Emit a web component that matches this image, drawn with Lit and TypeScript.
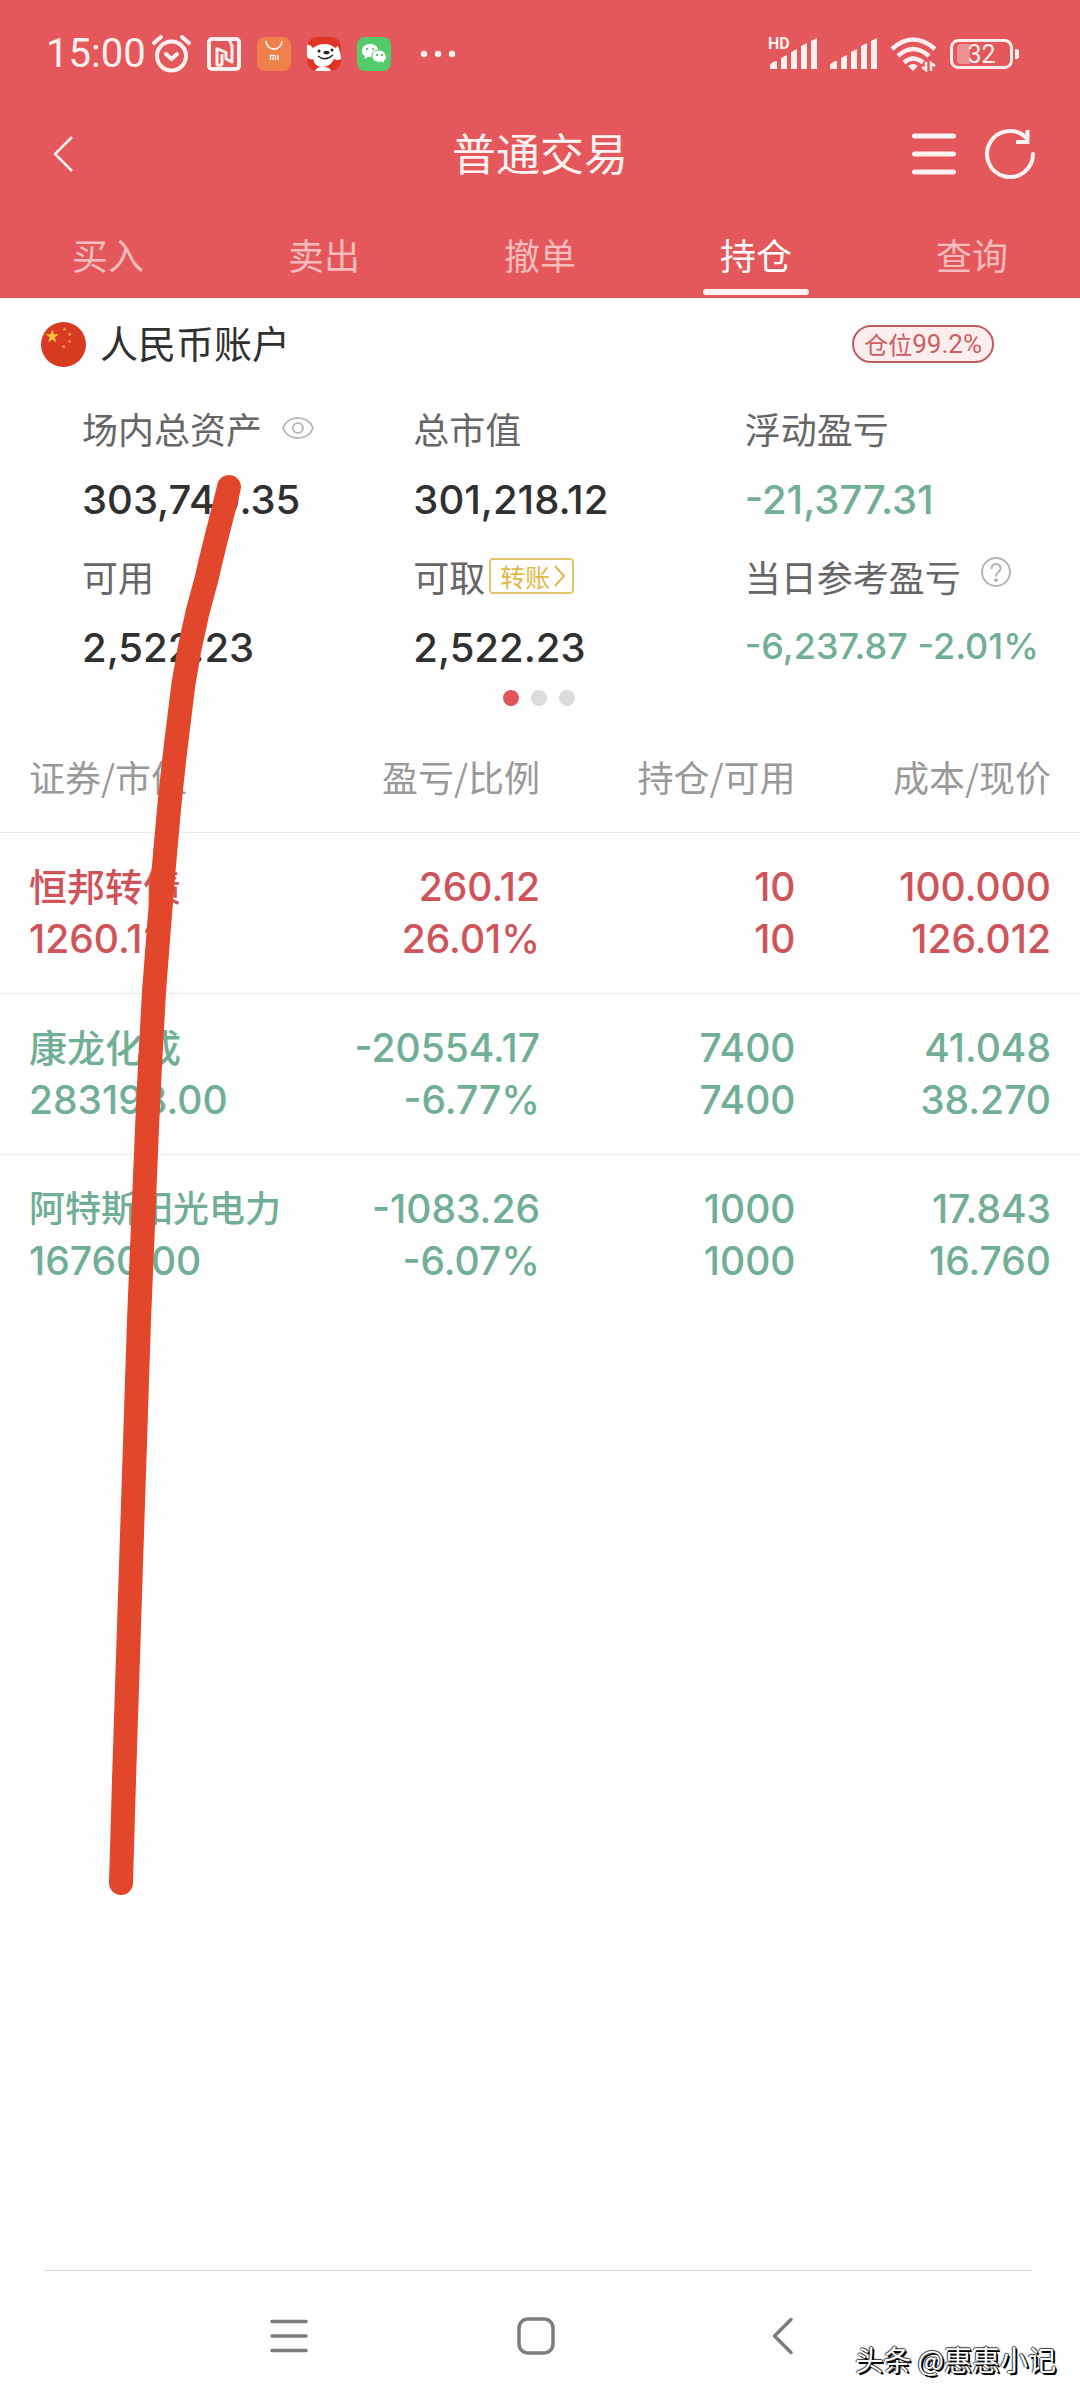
import { LitElement, html, svg, css } from "lit";
import { customElement, state } from "lit/decorators.js";
import { classMap } from "lit/directives/class-map.js";

interface Holding {
  name: string;
  longName?: boolean;
  value: string;
  profit: string;
  ratio: string;
  held: string;
  available: string;
  cost: string;
  price: string;
  trend: "up" | "down";
}

const HOLDINGS: Holding[] = [
  { name: "恒邦转债", value: "1260.12", profit: "260.12", ratio: "26.01%", held: "10", available: "10", cost: "100.000", price: "126.012", trend: "up" },
  { name: "康龙化成", value: "283198.00", profit: "-20554.17", ratio: "-6.77%", held: "7400", available: "7400", cost: "41.048", price: "38.270", trend: "down" },
  { name: "阿特斯阳光电力", longName: true, value: "16760.00", profit: "-1083.26", ratio: "-6.07%", held: "1000", available: "1000", cost: "17.843", price: "16.760", trend: "down" },
];

const TABS = ["买入", "卖出", "撤单", "持仓", "查询"];
const HEADS = ["证券/市值", "盈亏/比例", "持仓/可用", "成本/现价"];

@customElement("status-bar")
class StatusBar extends LitElement {
  static styles = css`
    :host { display: block; color: #fff0ee; }
    .bar { display: flex; align-items: center; justify-content: space-between; height: 108px; padding: 0 60px 0 46px; }
    .side { display: flex; align-items: center; }
    .time { font: 400 40px/48px Roboto, sans-serif; }
    .apps { margin-left: 6px; display: flex; align-items: center; gap: 16px; }
    .signals { gap: 12px; }
    .hd { font: 700 16px Roboto, sans-serif; }
    .battery { font: 400 25px Roboto, sans-serif; }
    svg { display: block; overflow: visible; }
  `;

  private signal() {
    return svg`<g fill="currentColor">
      <path d="M0 30v-4q3-4 7-4v8z" />
      <path d="M11 30V19l6-3v14z" />
      <path d="M21 30V13l6-3v20z" />
      <path d="M31 30V7l6-3v26z" />
      <path d="M41 30V2l6-3v31z" />
    </g>`;
  }

  render() {
    return html`<div class="bar">
      <div class="side">
        <span class="time">15:00</span>
        <div class="apps">
          <svg width="39" height="38" viewBox="0 0 39 38" fill="none" stroke="currentColor" stroke-width="4" stroke-linecap="round" stroke-linejoin="round">
            <circle cx="19.500" cy="21" r="14.500" /><path d="M2 8l7-6M37 8l-7-6M14 19l5.500 5 5.500-5" />
          </svg>
          <svg width="34" height="34" viewBox="0 0 34 34" fill="none" stroke="currentColor" stroke-width="3" stroke-linejoin="round">
            <rect x="2" y="2" width="30" height="30" rx="3" stroke-width="4" />
            <path d="M15.500 28H10V11.500L19 15.500V22L25 25V9L22 2M15 17v11" />
          </svg>
          <svg width="34" height="34" viewBox="0 0 34 34">
            <rect width="34" height="34" rx="8" fill="#f1814c" />
            <path d="M9 4a8 8 0 0 0 16 0" fill="none" stroke="#fff" stroke-width="1.500" />
            <path d="M13.500 23v-4.500h4q1 0 1 1V23M16 20v3M21 18v5" fill="none" stroke="#fff" stroke-width="1.300" />
          </svg>
          <svg width="34" height="34" viewBox="0 0 34 34">
            <rect width="34" height="34" rx="10" fill="#df3427" />
            <path d="M0 8q3-1 6 3Q11 7 18 7q6 0 10 4l3-2q3 7 3 13-4 2-7 0-4 8-12 8-7 0-9-8-5 1-6-3z" fill="#fff" />
            <path d="M8 34q1-4 8-4t8 4z" fill="#fff" />
            <circle cx="12" cy="14" r="1.500" fill="#222" /><circle cx="25" cy="13" r="1.500" fill="#222" /><ellipse cx="19.500" cy="15.500" rx="3" ry="1.800" fill="#222" />
            <path d="M11 19q7 6 15-1" fill="none" stroke="#222" stroke-width="1.300" />
          </svg>
          <svg width="34" height="34" viewBox="0 0 34 34">
            <rect width="34" height="34" rx="8" fill="#55cc6c" />
            <path d="M13 7c-5 0-8 3-8 7 0 3 1 4 3 5l-1 3 4-2c10 1 11-5 10-8-1-3-4-5-8-5z" fill="#fff" />
            <path d="M22 13c-5 0-7 3-7 6 0 5 5 7 10 6l3 2-1-3c2-1 3-3 2-6-1-3-4-5-7-5z" fill="#fff" stroke="#55cc6c" />
            <g fill="#3aa852"><circle cx="10" cy="12" r="1" /><circle cx="16" cy="12" r="1" /><circle cx="20" cy="18" r="1" /><circle cx="25" cy="18" r="1" /></g>
          </svg>
          <svg width="64" height="8" viewBox="0 0 64 8" fill="currentColor"><circle cx="17" cy="4" r="3.200" /><circle cx="31" cy="4" r="3.200" /><circle cx="45" cy="4" r="3.200" /></svg>
        </div>
      </div>
      <div class="side signals">
        <svg width="50" height="32" viewBox="-2 -1 50 32">
          <text class="hd" x="-2" y="10" fill="currentColor">HD</text>${this.signal()}
        </svg>
        <svg width="48" height="32" viewBox="0 -1 48 32">${this.signal()}</svg>
        <svg width="48" height="34" viewBox="0 0 48 34" fill="none" stroke="currentColor" stroke-width="4.500">
          <path d="M2 12Q23-7 45 12M8 19Q23 5 39 19M14 25.500q9-8 19 0" />
          <path d="M18 29q5-4 10 0l-5 5z" fill="currentColor" stroke="none" />
          <path d="M36 25v8l-4-3M41 34v-8l4 3" stroke-width="2.500" />
        </svg>
        <svg width="70" height="30" viewBox="0 0 70 30">
          <rect x="1.500" y="1.500" width="60" height="27" rx="7" fill="none" stroke="currentColor" stroke-width="3" />
          <path d="M11 5h9v20h-9q-4 0-4-4V9q0-4 4-4z" fill="#ee8f94" />
          <path d="M65 10h1q3 0 3 2v6q0 2-3 2h-1z" fill="currentColor" />
          <text class="battery" x="31.500" y="24" text-anchor="middle" fill="currentColor">32</text>
        </svg>
      </div>
    </div>`;
  }
}

@customElement("app-root")
class AppRoot extends LitElement {
  @state() private active = 3;

  static styles = css`
    :host { display: block; font-family: "Noto Sans CJK SC", sans-serif; color: #303030; }
    .page { position: relative; min-height: 100vh; display: flex; flex-direction: column; background: #fefefe; overflow: hidden; }
    button { border: 0; padding: 0; margin: 0; background: none; font: inherit; color: inherit; cursor: pointer; }
    svg { display: block; }
    .top { background: #e4575a; color: #fff3f1; }
    .titlebar { display: grid; grid-template-columns: 1fr auto 1fr; align-items: center; height: 92px; padding: 0 44px 0 52px; }
    .title { margin: 0; padding: 0 8px 4px 0; font-size: 44px; line-height: 60px; font-weight: 400; }
    .back { justify-self: start; }
    .actions { justify-self: end; display: flex; align-items: center; gap: 28px; }
    .tabs { display: grid; grid-template-columns: repeat(5, 1fr); }
    .tab { display: flex; flex-direction: column; align-items: center; gap: 5px; padding: 24px 0 3px; font-size: 36px; line-height: 60px; color: #f8bcbc; }
    .tab::after { content: ""; width: 106px; height: 6px; border-radius: 3px; }
    .tab.on { color: #fff; }
    .tab.on::after { background: #fff3f1; }

    .account { display: flex; align-items: center; height: 44px; padding: 24px 86px 0 41px; }
    .account-name { flex: 1; margin: 0 0 0 14px; padding-bottom: 4px; font-size: 38px; line-height: 44px; font-weight: 400; }
    .ratio { display: flex; align-items: center; height: 34px; padding: 0 10px; border: 2px solid #c05c61; border-radius: 19px; background: #fdeeee; color: #cf5c63; font-size: 24px; line-height: 34px; }
    .ratio-num { font: 400 26px/34px Roboto, sans-serif; }
    .figures { display: grid; grid-template-columns: repeat(3, 1fr); gap: 22px 0; margin: 38px 4px 0 82px; }
    .figure { display: flex; flex-direction: column; gap: 18px; white-space: nowrap; }
    .label { display: flex; align-items: center; height: 48px; font-size: 36px; color: #666; }
    .num { font: 500 40px/60px Inter, "Noto Sans CJK SC", sans-serif; }
    .num.small { font-size: 36px; line-height: 56px; }
    .eye { margin-left: 20px; }
    .help { margin-left: 20px; padding-bottom: 8px; }
    .transfer { display: flex; align-items: center; gap: 4px; height: 36px; margin-left: 4px; padding: 0 6px 0 9px; border: 2px solid #e3c56c; border-radius: 4px; color: #e0b947; font-size: 25px; line-height: 32px; }
    .dots { display: flex; justify-content: center; gap: 12px; margin: 12px 2px 18px 0; }
    .dot { width: 16px; height: 16px; border-radius: 50%; background: #dcdcdc; }
    .dot.on { background: #e0565b; }

    .holdings, .holdings thead, .holdings tbody { display: block; }
    .row { display: grid; grid-template-columns: repeat(4, 1fr); padding: 28px 29px; border-bottom: 1px solid #e9e9e9; text-align: right; font: 500 39px/52px Inter, "Noto Sans CJK SC", sans-serif; }
    .holdings tbody .row:last-child { border-bottom: 0; }
    .row.head { padding: 26px 29px 30px; color: #999; font: 400 36px/52px "Noto Sans CJK SC", sans-serif; }
    .cell { padding: 0; font-weight: inherit; white-space: nowrap; }
    .cell:first-child { text-align: left; }
    .line { display: block; height: 52px; }
    .name { font-size: 38px; }
    .name.long { font-size: 36px; }
    .up { color: #cf545a; }
    .down { color: #70ae95; }

    .nav { display: flex; justify-content: center; gap: 209px; height: 129px; margin: auto 48px 0 44px; padding-right: 4px; border-top: 1px solid #dcdcdc; color: #7c7c7c; align-items: center; }
    .nav svg { overflow: visible; }
    .scribble { position: absolute; left: 0; top: 0; pointer-events: none; }
    .mark { position: absolute; right: 24px; bottom: 20px; font-size: 28px; line-height: 42px; color: #fff; text-shadow: 2px 2px 0 #000, 1px 0 1px #000, -1px 0 1px #444, 0 -1px 1px #444; }
  `;

  render() {
    return html`<main class="page">
      <header class="top">
        <status-bar></status-bar>
        <div class="titlebar">
          <button class="back" aria-label="返回">
            <svg width="22" height="36" viewBox="0 0 22 36" fill="none" stroke="currentColor" stroke-width="2.500"><path d="M20 1L3 18l17 17" /></svg>
          </button>
          <h1 class="title">普通交易</h1>
          <div class="actions">
            <button aria-label="菜单">
              <svg width="44" height="44" viewBox="0 0 44 44" stroke="currentColor" stroke-width="5" stroke-linecap="round"><path d="M2.500 4h39M2.500 22h39M2.500 40h39" /></svg>
            </button>
            <button aria-label="刷新">
              <svg width="52" height="52" viewBox="0 0 52 52" fill="none" stroke="currentColor" stroke-width="4"><path d="M49 26A23 23 0 1 1 42 9.500" stroke-linecap="round" /><path d="M43.500 2v12H32" /></svg>
            </button>
          </div>
        </div>
        <nav class="tabs">
          ${TABS.map((t, i) => html`<button class=${classMap({ tab: true, on: i === this.active })} @click=${() => (this.active = i)}>${t}</button>`)}
        </nav>
      </header>

      <section class="account">
        <svg width="45" height="45" viewBox="0 0 44 44">
          <circle cx="22" cy="22" r="22" fill="#d93a22" />
          <path d="M11 7l1.500 5H17.500l-4 3 1.500 5-4-3-4 3 1.500-5-4-3H9.500z" fill="#f8c43c" />
          <g fill="#ee8a35"><circle cx="23" cy="7" r="1.600" /><circle cx="28" cy="12" r="1.600" /><circle cx="28" cy="19" r="1.600" /><circle cx="22" cy="24" r="1.600" /></g>
        </svg>
        <h2 class="account-name">人民币账户</h2>
        <span class="ratio">仓位<span class="ratio-num">99.2%</span></span>
      </section>

      <section class="figures">
        <div class="figure">
          <div class="label">场内总资产
            <button class="eye" aria-label="隐藏金额">
              <svg width="32" height="24" viewBox="0 0 32 24" fill="none" stroke="#bbb" stroke-width="2"><path d="M1 12Q5 2 16 2t15 10q-4 10-15 10T1 12z" /><circle cx="16" cy="12" r="5" /></svg>
            </button>
          </div>
          <div class="num">303,749.35</div>
        </div>
        <div class="figure"><div class="label">总市值</div><div class="num">301,218.12</div></div>
        <div class="figure"><div class="label">浮动盈亏</div><div class="num down">-21,377.31</div></div>
        <div class="figure"><div class="label">可用</div><div class="num">2,522.23</div></div>
        <div class="figure">
          <div class="label">可取
            <button class="transfer">转账<svg width="12" height="22" viewBox="0 0 12 22" fill="none" stroke="currentColor" stroke-width="2"><path d="M1 1l9 10-9 10" /></svg></button>
          </div>
          <div class="num">2,522.23</div>
        </div>
        <div class="figure">
          <div class="label">当日参考盈亏
            <button class="help" aria-label="说明">
              <svg width="30" height="30" viewBox="0 0 30 30" fill="none" stroke="#b5b5b5" stroke-width="2"><circle cx="15" cy="15" r="14" /><path d="M10.500 12q0-5 4.500-5t4.500 4.500q0 2-2.500 4-2 1.500-2 4" /><circle cx="15" cy="23" r="1" /></svg>
            </button>
          </div>
          <div class="num small down">-6,237.87 -2.01%</div>
        </div>
      </section>
      <div class="dots"><span class="dot on"></span><span class="dot"></span><span class="dot"></span></div>

      <table class="holdings">
        <thead>
          <tr class="row head">${HEADS.map((h) => html`<th class="cell" scope="col">${h}</th>`)}</tr>
        </thead>
        <tbody>
          ${HOLDINGS.map((h) => html`<tr class="row ${h.trend}">
            <td class="cell"><span class=${classMap({ line: true, name: true, long: !!h.longName })}>${h.name}</span><span class="line">${h.value}</span></td>
            <td class="cell"><span class="line">${h.profit}</span><span class="line">${h.ratio}</span></td>
            <td class="cell"><span class="line">${h.held}</span><span class="line">${h.available}</span></td>
            <td class="cell"><span class="line">${h.cost}</span><span class="line">${h.price}</span></td>
          </tr>`)}
        </tbody>
      </table>

      <footer class="nav">
        <button aria-label="最近任务"><svg width="38" height="38" viewBox="0 0 38 38" stroke="currentColor" stroke-width="3.500" stroke-linecap="round"><path d="M2 4.500h34M2 19h34M2 33.500h34" /></svg></button>
        <button aria-label="主屏幕"><svg width="38" height="38" viewBox="0 0 38 38" fill="none" stroke="currentColor" stroke-width="3.500"><rect x="2" y="2" width="34" height="34" rx="9" /></svg></button>
        <button aria-label="返回"><svg width="38" height="38" viewBox="0 0 38 38" fill="none" stroke="currentColor" stroke-width="3.500" stroke-linecap="round" stroke-linejoin="round"><path d="M27 2.500L10.500 19 27 35.500" /></svg></button>
      </footer>

      <svg class="scribble" width="260" height="1920" viewBox="0 0 260 1920" fill="none" stroke="#e2472b" stroke-width="24" stroke-linecap="round" stroke-linejoin="round">
        <path d="M229 487C222 517 214 545 207 577C193 625 184 670 179 720C174 760 170 795 167 832C162 885 158 940 154 992C151 1046 148 1100 146 1153L139 1320L124 1780L121 1883" />
      </svg>
      <span class="mark">头条 @惠惠小记</span>
    </main>`;
  }
}
